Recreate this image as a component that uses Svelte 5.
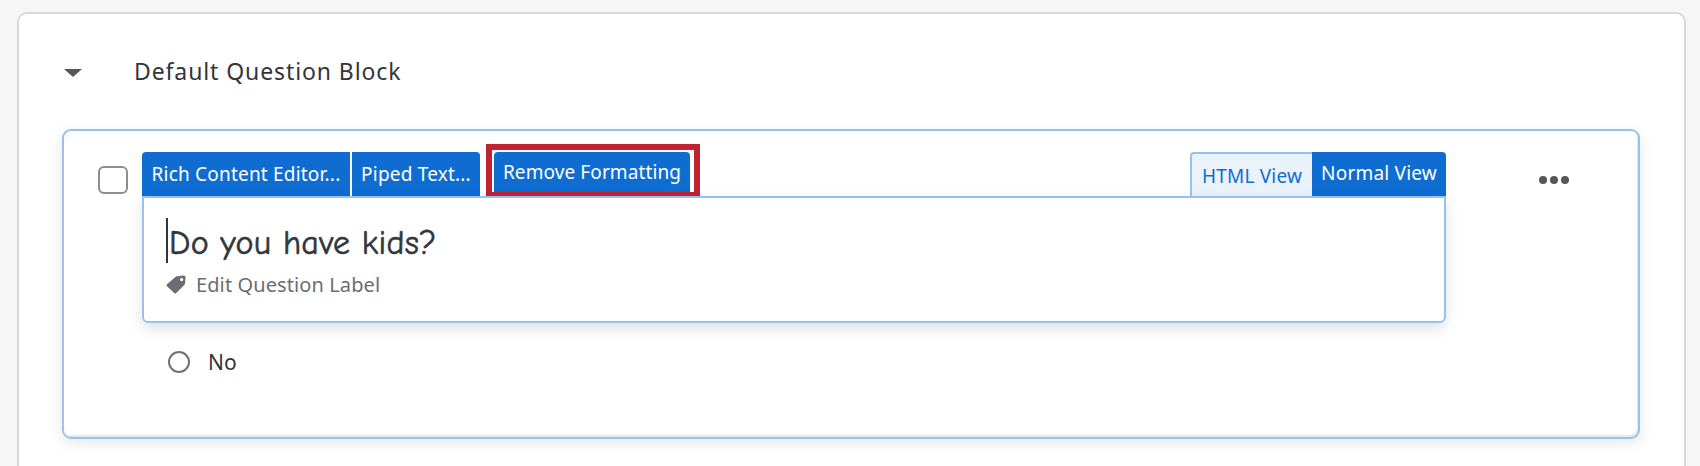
<script>
  let question = 'Do you have kids?';
</script>

<div class="page">
  <section class="block">
    <header class="block-head">
      <span class="caret-down"></span>
      <h2>Default Question Block</h2>
    </header>

    <div class="question">
      <span class="check"></span>
      <div class="body">
        <div class="toolbar">
          <button class="tb first">Rich Content Editor...</button>
          <button class="tb second">Piped Text...</button>
          <div class="highlight">
            <button class="tb third">Remove Formatting</button>
          </div>
          <div class="views">
            <button class="view html">HTML View</button>
            <button class="view normal">Normal View</button>
          </div>
        </div>
        <div class="editor">
          <div class="text"><span class="cursor"></span>{question}</div>
          <div class="label">
            <svg width="20" height="19" viewBox="0 0 20 19">
              <path d="M11 1.2 L17.6 0.6 Q19.6 0.6 19.6 2.6 L19 8.6 Q18.9 9.4 18.3 10 L10.2 18 Q9.2 19 8.2 18 L1 11.2 Q0 10.2 1 9.2 L9.4 1.9 Q10.1 1.3 11 1.2 Z M15.6 3 a1.6 1.6 0 1 0 0.01 0 Z" fill="#6b6d72" fill-rule="evenodd"/>
            </svg>
            <span>Edit Question Label</span>
          </div>
        </div>
        <div class="choice">
          <span class="radio"></span>
          <span>No</span>
        </div>
      </div>
      <div class="dots"><i></i><i></i><i></i></div>
    </div>
  </section>
</div>

<style>
  :global(body) {
    margin: 0;
    background: #f6f6f6;
  }

  .page {
    height: 466px;
    overflow: hidden;
    padding: 12px 14px 0 17px;
    box-sizing: border-box;
    font-family: "Noto Sans", "Liberation Sans", sans-serif;
  }

  .block {
    background: #fff;
    border: 2px solid #d8d8d8;
    border-bottom: none;
    border-radius: 10px 10px 0 0;
    height: 470px;
    padding: 0 44px 0 43px;
    box-sizing: border-box;
  }

  .block-head {
    display: flex;
    align-items: center;
    height: 115px;
  }

  .caret-down {
    width: 0;
    height: 0;
    border-left: 9px solid transparent;
    border-right: 9px solid transparent;
    border-top: 8px solid #54565b;
    margin: 2px 0 0 2px;
  }

  h2 {
    margin: -2px 0 0 52px;
    font-size: 23px;
    font-weight: 400;
    letter-spacing: 0.9px;
    color: #32363a;
  }

  .question {
    display: flex;
    position: relative;
    height: 310px;
    box-sizing: border-box;
    border: 2px solid #98c2ee;
    border-radius: 9px;
    box-shadow: 0 4px 14px rgba(0, 0, 0, 0.1), inset -2px -3px 1px -1px #e8e8e8;
    padding: 21px 0 0 34px;
  }

  .check {
    width: 30px;
    height: 28px;
    box-sizing: border-box;
    border: 2px solid #8a8d92;
    border-radius: 6px;
    margin: 14px 14px 0 0;
    flex: none;
  }

  .body {
    width: 1304px;
    flex: none;
  }

  .toolbar {
    display: flex;
    height: 44px;
    align-items: flex-end;
  }

  button {
    font: inherit;
    border: none;
    padding: 0;
    height: 44px;
    font-size: 19px;
    letter-spacing: 0.2px;
    color: #fff;
    background: #0f6dd2;
    text-align: center;
    flex: none;
    white-space: nowrap;
  }

  .tb.first {
    width: 208px;
    border-top-left-radius: 4px;
    margin-right: 2px;
  }

  .tb.second {
    width: 128px;
    border-top-right-radius: 4px;
  }

  .highlight {
    box-sizing: border-box;
    width: 214px;
    height: 54px;
    border: 6px solid #c02333;
    padding: 2px 2px 0;
    margin: 0 0 -2px 6px;
    position: relative;
  }

  .tb.third {
    width: 196px;
    height: 40px;
    display: block;
    border-radius: 4px 4px 0 0;
    letter-spacing: 0.1px;
  }

  .views {
    display: flex;
    margin-left: auto;
  }

  .view.html {
    width: 122px;
    box-sizing: border-box;
    background: #eaf3fc;
    color: #0f6dd2;
    border: 2px solid #98c2ee;
    border-bottom: none;
    border-right: none;
    border-top-left-radius: 4px;
    padding-top: 2px;
  }

  .view.normal {
    width: 134px;
    border-top-right-radius: 4px;
    padding-bottom: 2px;
  }

  .editor {
    box-sizing: border-box;
    height: 127px;
    background: #fff;
    border: 2px solid #98c2ee;
    border-radius: 0 0 6px 6px;
    box-shadow: 0 6px 14px rgba(0, 0, 0, 0.12);
    padding: 20px 0 0 22px;
    position: relative;
  }

  .text {
    position: relative;
    top: 2px;
    font-family: "Comic Sans MS", "Comic Neue", "DejaVu Sans", sans-serif;
    font-size: 34px;
    letter-spacing: 0.25px;
    -webkit-text-stroke: 0.6px #32363a;
    line-height: 46px;
    color: #32363a;
    white-space: nowrap;
  }

  .cursor {
    display: inline-block;
    width: 2px;
    height: 45px;
    background: #32363a;
    vertical-align: top;
    margin: -2px 1px 0 0;
  }

  .label {
    display: flex;
    align-items: center;
    gap: 10px;
    margin-top: 7px;
    font-size: 20px;
    letter-spacing: 0.1px;
    color: #6b6d72;
  }

  .choice {
    display: flex;
    align-items: center;
    gap: 18px;
    margin: 25px 0 0 26px;
    font-size: 21px;
    color: #32363a;
  }

  .radio {
    width: 22px;
    height: 22px;
    box-sizing: border-box;
    border: 2px solid #6f7176;
    border-radius: 50%;
  }

  .dots {
    display: flex;
    gap: 3px;
    margin: 24px 0 0 93px;
    height: 8px;
  }

  .dots i {
    width: 8px;
    height: 8px;
    border-radius: 50%;
    background: #54565b;
  }
</style>
